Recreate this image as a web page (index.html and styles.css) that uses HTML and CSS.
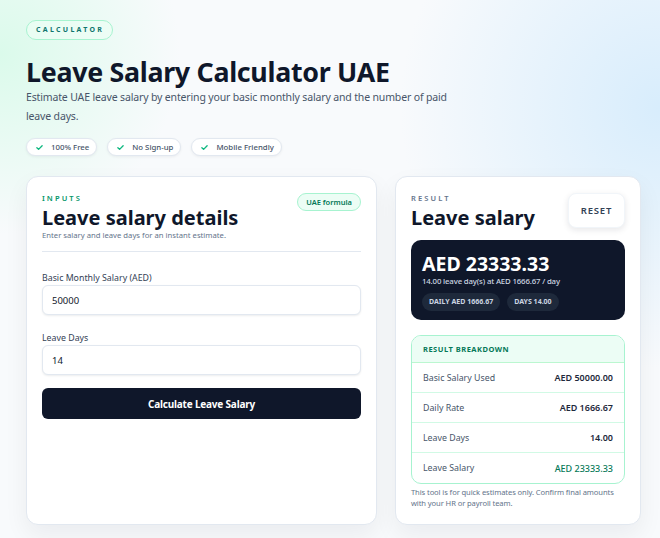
FILE: index.html
```html
<!DOCTYPE html>
<html lang="en">
<head>
<meta charset="utf-8">
<title>Leave Salary Calculator UAE</title>
<link rel="stylesheet" href="styles.css">
</head>
<body>
<main class="page">
  <header class="hero">
    <span class="kicker">CALCULATOR</span>
    <h1 class="title">Leave Salary Calculator UAE</h1>
    <p class="lead">Estimate UAE leave salary by entering your basic monthly salary and the number of paid leave days.</p>
    <ul class="pills">
      <li class="pill"><svg class="check" viewBox="0 0 12 12"><path d="M2.5 6.2l2.3 2.3 4.7-4.8" /></svg>100% Free</li>
      <li class="pill"><svg class="check" viewBox="0 0 12 12"><path d="M2.5 6.2l2.3 2.3 4.7-4.8" /></svg>No Sign-up</li>
      <li class="pill"><svg class="check" viewBox="0 0 12 12"><path d="M2.5 6.2l2.3 2.3 4.7-4.8" /></svg>Mobile Friendly</li>
    </ul>
  </header>

  <section class="grid">
    <div class="card">
      <div class="card-head">
        <div>
          <div class="eyebrow green">INPUTS</div>
          <h2 class="card-title">Leave salary details</h2>
          <p class="card-sub">Enter salary and leave days for an instant estimate.</p>
        </div>
        <span class="tag">UAE formula</span>
      </div>
      <hr class="divider">
      <label class="field">
        <span class="label">Basic Monthly Salary (AED)</span>
        <input class="input" type="text" value="50000">
      </label>
      <label class="field">
        <span class="label">Leave Days</span>
        <input class="input" type="text" value="14">
      </label>
      <button class="btn-primary" type="button">Calculate Leave Salary</button>
    </div>

    <div class="card">
      <div class="card-head">
        <div>
          <div class="eyebrow gray">RESULT</div>
          <h2 class="card-title">Leave salary</h2>
        </div>
        <button class="btn-reset" type="button">RESET</button>
      </div>
      <div class="result">
        <div class="result-amount">AED 23333.33</div>
        <div class="result-sub">14.00 leave day(s) at AED 1666.67 / day</div>
        <div class="chips">
          <span class="chip">DAILY AED 1666.67</span>
          <span class="chip">DAYS 14.00</span>
        </div>
      </div>
      <div class="breakdown">
        <div class="bd-head">RESULT BREAKDOWN</div>
        <div class="bd-row"><span>Basic Salary Used</span><strong>AED 50000.00</strong></div>
        <div class="bd-row"><span>Daily Rate</span><strong>AED 1666.67</strong></div>
        <div class="bd-row"><span>Leave Days</span><strong>14.00</strong></div>
        <div class="bd-row"><span>Leave Salary</span><strong class="accent">AED 23333.33</strong></div>
      </div>
      <p class="note">This tool is for quick estimates only. Confirm final amounts with your HR or payroll team.</p>
    </div>
  </section>
</main>
</body>
</html>
```

FILE: styles.css
```css
* { box-sizing: border-box; }
html, body { margin: 0; padding: 0; }
body {
  font-family: "Noto Sans", "Open Sans", sans-serif;
  color: #0f172a;
  background:
    radial-gradient(circle at 0% 10%, rgba(209, 250, 229, 0.75) 0, rgba(236, 253, 245, 0) 180px),
    radial-gradient(circle at 100% 20%, rgba(214, 236, 252, 0.95) 0, rgba(239, 246, 255, 0) 260px),
    #f8fafc;
  min-height: 538px;
}
.page {
  padding: 20px 19px 16px 26px;
}
.hero { display: flex; flex-direction: column; align-items: flex-start; }
.kicker {
  display: inline-block;
  height: 20px;
  line-height: 18px;
  padding: 0 8px 0 9px;
  border: 1px solid #a7f3d0;
  border-radius: 999px;
  background: rgba(236, 253, 245, 0.7);
  color: #0f766e;
  font-size: 7px;
  font-weight: 700;
  letter-spacing: 2.3px;
}
.title {
  margin: 16px 0 0;
  font-size: 26.8px;
  line-height: 32px;
  font-weight: 700;
  letter-spacing: -0.3px;
  color: #0f172a;
}
.lead {
  margin: 0;
  max-width: 440px;
  font-size: 10.5px;
  line-height: 19px;
  letter-spacing: -0.15px;
  color: #475569;
}
.pills {
  list-style: none;
  display: flex;
  gap: 10px;
  margin: 12px 0 0;
  padding: 0;
}
.pill {
  display: flex;
  align-items: center;
  gap: 7px;
  height: 18px;
  padding: 0 7px 0 8px;
  border: 1px solid #e2e8f0;
  border-radius: 999px;
  background: #fff;
  box-shadow: 0 1px 3px rgba(15, 23, 42, 0.06);
  font-size: 7.8px;
  font-weight: 500;
  color: #475569;
}
.check { width: 9px; height: 9px; fill: none; stroke: #10b981; stroke-width: 1.8; stroke-linecap: round; stroke-linejoin: round; }

.grid {
  display: grid;
  grid-template-columns: 351fr 246fr;
  gap: 18px;
  margin-top: 20px;
}
.card {
  background: #fff;
  border: 1px solid #e2e8f0;
  border-radius: 12px;
  box-shadow: 0 10px 24px rgba(15, 23, 42, 0.06);
  padding: 16px 15px 15px;
  min-height: 346px;
}
.card-head { display: flex; justify-content: space-between; align-items: flex-start; }
.eyebrow {
  font-size: 7.5px;
  font-weight: 600;
  letter-spacing: 2.1px;
  line-height: 10px;
}
.eyebrow.green { color: #059669; }
.eyebrow.gray { color: #64748b; }
.card-title {
  margin: 3px 0 0;
  font-size: 20px;
  line-height: 24px;
  font-weight: 700;
  color: #0f172a;
}
.card-sub {
  margin: 0;
  font-size: 7.7px;
  line-height: 10px;
  color: #64748b;
}
.tag {
  margin-top: 0;
  height: 18px;
  line-height: 16px;
  padding: 0 8px;
  border: 1px solid #a7f3d0;
  border-radius: 999px;
  background: #ecfdf5;
  color: #047857;
  font-size: 7.5px;
  font-weight: 600;
}
.divider {
  border: 0;
  border-top: 1px solid #e2e8f0;
  margin: 11px 0 20px;
}
.field { display: flex; flex-direction: column; margin-bottom: 17px; }
.field:last-of-type { margin-bottom: 13px; }
.label {
  font-size: 8.8px;
  line-height: 12px;
  color: #334155;
  margin-bottom: 1px;
}
.input {
  height: 30px;
  border: 1px solid #e2e8f0;
  border-radius: 6px;
  padding: 0 9px;
  font-family: inherit;
  font-size: 9.5px;
  color: #0f172a;
  background: #fff;
  box-shadow: 0 1px 2px rgba(15, 23, 42, 0.08);
  outline: none;
}
.btn-primary {
  width: 100%;
  height: 31px;
  border: 0;
  border-radius: 6px;
  background: #0f172a;
  color: #fff;
  font-family: inherit;
  font-size: 10px;
  font-weight: 700;
  letter-spacing: -0.2px;
  cursor: pointer;
}
.btn-reset {
  width: 57px;
  height: 35px;
  margin-top: 0;
  border: 1px solid #f1f5f9;
  border-radius: 8px;
  background: #fff;
  box-shadow: 0 2px 6px rgba(15, 23, 42, 0.1);
  font-family: inherit;
  font-size: 9.5px;
  font-weight: 600;
  letter-spacing: 0.8px;
  color: #334155;
}
.result {
  margin-top: 10px;
  background: #0f172a;
  border-radius: 10px;
  padding: 12px 11px 9px;
  color: #fff;
}
.result-amount {
  font-size: 19.5px;
  line-height: 24px;
  font-weight: 700;
}
.result-sub {
  font-size: 7.8px;
  line-height: 10px;
  color: #cbd5e1;
  font-weight: 500;
  letter-spacing: -0.15px;
}
.chips { display: flex; gap: 7px; margin-top: 7px; }
.chip {
  height: 18px;
  line-height: 18px;
  padding: 0 7px;
  border-radius: 999px;
  background: #1e293b;
  color: #cbd5e1;
  font-size: 7px;
  font-weight: 700;
}
.breakdown {
  margin-top: 15px;
  border: 1px solid #a7f3d0;
  border-radius: 10px;
  overflow: hidden;
}
.bd-head {
  height: 27px;
  line-height: 26px;
  padding: 0 11px;
  background: #ecfdf5;
  border-bottom: 1px solid #bbf7d0;
  color: #047857;
  font-size: 7.5px;
  font-weight: 700;
  letter-spacing: 0.5px;
}
.bd-row {
  display: flex;
  justify-content: space-between;
  align-items: center;
  height: 30px;
  padding: 0 11px;
  border-bottom: 1px solid #d1fae5;
  font-size: 8.8px;
}
.bd-row:last-child { border-bottom: 0; }
.bd-row span { color: #475569; }
.bd-row strong { color: #1e293b; font-weight: 600; font-size: 9px; }
.bd-row strong.accent { color: #047857; font-weight: 500; }
.note {
  margin: 3px 0 0;
  font-size: 7.6px;
  line-height: 11px;
  letter-spacing: -0.1px;
  color: #64748b;
}
```
